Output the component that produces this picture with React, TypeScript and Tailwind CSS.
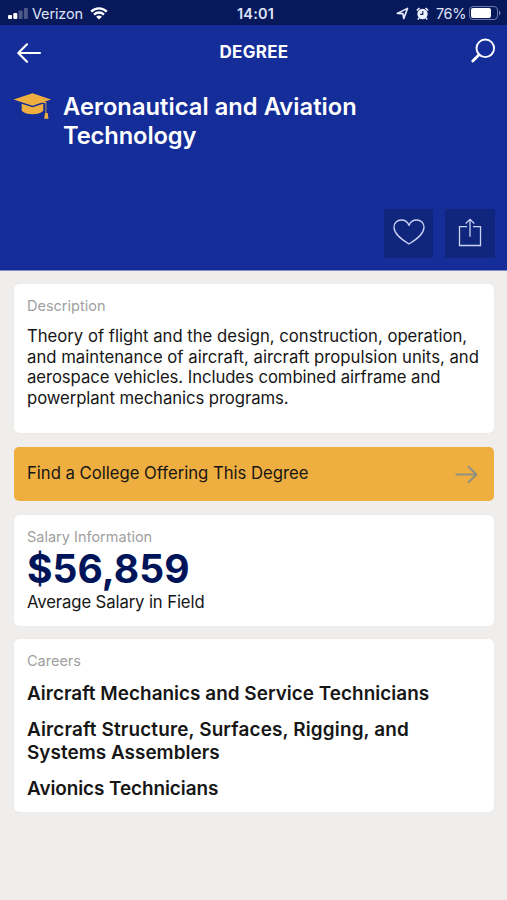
import React from "react";

function Card({ title, className, children }: { title: string; className: string; children: React.ReactNode }) {
  return (
    <section className={`rounded-[5px] bg-white px-[13px] shadow-[0_0_1px_rgba(0,0,0,0.12)] ${className}`}>
      <h2 className="text-[14.5px] leading-[20px] text-[#a0a0a0]">{title}</h2>
      {children}
    </section>
  );
}

function StatusBar() {
  return (
    <div className="flex h-[25px] items-center bg-[#08195b] pt-[3px] text-[14.5px] leading-[20px] text-[#dfe4f8]">
      <div className="flex flex-1 items-center pl-2">
        <svg width="20" height="12" viewBox="0 0 20 12" fill="#fff">
          <rect x="0" y="7" width="4" height="4" rx="1" />
          <rect x="5.3" y="5" width="4" height="6" rx="1" />
          <rect x="10.6" y="2.5" width="4" height="8.5" rx="1" opacity=".28" />
          <rect x="15.9" y="0" width="4" height="11" rx="1" opacity=".28" />
        </svg>
        <span className="ml-[4px] w-[51px] whitespace-nowrap tracking-[-0.15px]">Verizon</span>
        <svg className="-mt-[2px] ml-[7px]" width="18" height="13" viewBox="0 0 18 13" fill="none" stroke="#fff" strokeWidth="2.3">
          <path d="M1.2 4.6C5.6.3 12.4.3 16.8 4.6M4 7.6c2.9-2.8 7.1-2.8 10 0" />
          <path d="M9 12.6 6.1 9.8c1.6-1.6 4.2-1.6 5.8 0z" fill="#fff" stroke="none" />
        </svg>
      </div>
      <span className="-mr-[2px] font-semibold tracking-[0.2px]">14:01</span>
      <div className="flex flex-1 items-center justify-end pr-[6px]">
        <svg className="-mt-[2px]" width="13" height="13" viewBox="0 0 13 13" fill="none" stroke="#e6eaff" strokeWidth="1.6" strokeLinejoin="round">
          <path d="M1.3 6.4 11.5 1.4 7.8 11.5 6.9 6.6z" />
        </svg>
        <svg className="-mt-[2px] ml-[7px]" width="13" height="13" viewBox="0 0 13 13">
          <circle cx="6.5" cy="7" r="5.2" fill="#eef1ff" />
          <path d="M.8 3.5 3.5 1M12.2 3.5 9.5 1M3 11 1.8 12.4M10 11l1.2 1.4" stroke="#eef1ff" strokeWidth="1.6" />
          <path d="M6.8 4v3.4H4.2" fill="none" stroke="#08195b" strokeWidth="1.1" />
        </svg>
        <span className="ml-[7px] w-[30px] whitespace-nowrap tracking-[-0.4px]">76%</span>
        <svg className="-mt-[2px] ml-[3px]" width="32" height="14" viewBox="0 0 32 14">
          <rect x=".5" y=".5" width="28" height="13" rx="3.5" fill="none" stroke="#6c79ac" />
          <rect x="2" y="2" width="20" height="10" rx="2" fill="#fff" />
          <path d="M30 4.5c2 .8 2 4.2 0 5z" fill="#6c79ac" />
        </svg>
      </div>
    </div>
  );
}

export default function App() {
  return (
    <main className="h-[900px] w-[507px] overflow-hidden bg-[#efeeed] font-['Inter','Liberation_Sans',sans-serif] text-[#161616]">
      <header className="flex h-[270px] flex-col bg-[#142d98] text-white shadow-[0_1px_0_#7f8bc4]">
        <StatusBar />
        <nav className="flex h-[54px] items-center justify-between pl-[17px] pr-[11px]">
          <svg className="mt-px" width="25" height="20" viewBox="0 0 25 20" fill="none" stroke="#fff" strokeWidth="2.2" strokeLinecap="round" strokeLinejoin="round">
            <path d="M23 10H1.5M10 1.3 1.3 10l8.7 8.7" />
          </svg>
          <h1 className="mr-[5px] text-[17px] font-bold leading-[20px] tracking-[0.3px]">DEGREE</h1>
          <svg className="-mt-[3px]" width="25" height="25" viewBox="0 0 25 25" fill="none" stroke="#fff" strokeLinecap="round">
            <circle cx="14.3" cy="10.3" r="8.8" strokeWidth="1.9" />
            <path d="m8 16.8-6.2 6.1" strokeWidth="2.8" />
          </svg>
        </nav>
        <div className="flex pl-[13px] pt-[13px]">
          <svg className="mt-px" width="39" height="27" viewBox="0 0 39 27" fill="#efae40">
            <path d="M.5 6.5 19.5.3l18.6 6.2-18.6 6.2z" />
            <path d="M8.7 10.8 19.5 14.3l10.8-3.5v7c-4 4.7-17.6 4.7-21.6 0z" />
            <path d="M20 6.2 33.3 9v11h1.4l.8 5.7h-4.3L32 20h.5v-9.8L20 7.5z" />
          </svg>
          <h2 className="ml-[11px] text-[23.7px] font-semibold leading-[29px]">
            <span className="block tracking-[0.04px]">Aeronautical and Aviation</span>
            <span className="block tracking-[-0.1px]">Technology</span>
          </h2>
        </div>
        <div className="mb-[12px] mr-[12px] mt-auto flex justify-end gap-[12px]">
          <button className="flex h-[49px] w-[49px] items-center justify-center bg-[#10267c]">
            <svg className="-mt-[3px]" width="32" height="26" viewBox="0 0 32 26" fill="none" stroke="#cbd3f5" strokeWidth="1.3" strokeLinejoin="round">
              <path d="M16 25C10 21.3 1 15.7 1 8.3 1 4 4.2 1 8.3 1 12 1 14.8 3.2 16 6.4 17.2 3.2 20 1 23.7 1 27.8 1 31 4 31 8.3 31 15.7 22 21.3 16 25z" />
            </svg>
          </button>
          <button className="flex h-[49px] w-[50px] items-center justify-center bg-[#10267c]">
            <svg className="-mt-[2px]" width="24" height="29" viewBox="0 0 24 29" fill="none" stroke="#cbd3f5" strokeWidth="1.3">
              <path d="M9 8.7H1.5v18.8h21V8.7H15M12 18.8V1.5M7.7 5.5 12 1.3l4.3 4.2" />
            </svg>
          </button>
        </div>
      </header>
      <div className="flex flex-col gap-[14px] pl-[14px] pr-[13px] pt-[14px]">
        <Card title="Description" className="h-[149px] pt-[12px]">
          <p className="mt-[10px] whitespace-nowrap text-[16.7px] leading-[20.5px]">
            <span className="block tracking-[-0.01px]">Theory of flight and the design, construction, operation,</span>
            <span className="block tracking-[0.015px]">and maintenance of aircraft, aircraft propulsion units, and</span>
            <span className="block tracking-[-0.06px]">aerospace vehicles. Includes combined airframe and</span>
            <span className="block tracking-[-0.07px]">powerplant mechanics programs.</span>
          </p>
        </Card>
        <button className="flex h-[54px] items-center justify-between rounded-[5px] bg-[#efae40] pl-[13px] pr-[16px] text-[16.7px]">
          <span className="tracking-[-0.02px]">Find a College Offering This Degree</span>
          <svg width="23" height="19" viewBox="0 0 23 19" fill="none" stroke="#8e9180" strokeWidth="1.9" strokeLinejoin="round">
            <path d="M.5 9.5h21M13 1.2l8.5 8.3L13 17.8" />
          </svg>
        </button>
        <Card title="Salary Information" className="h-[111px] pt-[12px]">
          <p className="-mt-px text-[39px] font-bold leading-[46px] tracking-[0.05px] text-[#001459]">$56,859</p>
          <p className="text-[16.7px] leading-[20px] tracking-[-0.11px]">Average Salary in Field</p>
        </Card>
        <Card title="Careers" className="-mt-px h-[173px] pt-[12px]">
          <ul className="mt-[11px] flex flex-col gap-[13px] whitespace-nowrap text-[18.9px] font-semibold leading-[23px]">
            <li className="tracking-[0.03px]">Aircraft Mechanics and Service Technicians</li>
            <li>
              <span className="block tracking-[0.16px]">Aircraft Structure, Surfaces, Rigging, and</span>
              <span className="block tracking-[0.04px]">Systems Assemblers</span>
            </li>
            <li className="tracking-[-0.07px]">Avionics Technicians</li>
          </ul>
        </Card>
      </div>
    </main>
  );
}
